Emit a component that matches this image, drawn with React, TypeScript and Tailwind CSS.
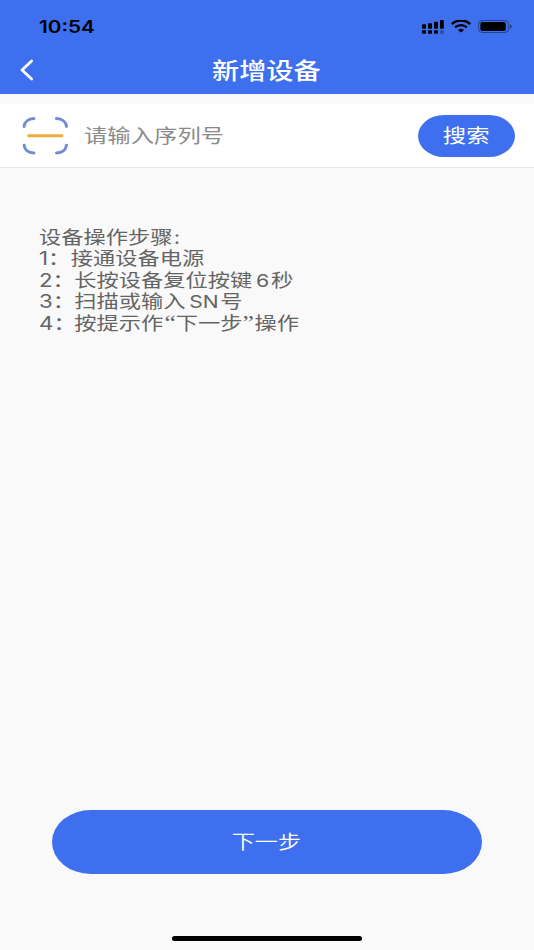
import type { ReactNode } from "react";

const STEPS: { num: string; text: ReactNode; indent: string }[] = [
  { num: "1", text: "接通设备电源", indent: "w-[26px]" },
  { num: "2", text: <>长按设备复位按键<span className="mr-[1.5px] ml-[3px] text-[17.6px]">6</span>秒</>, indent: "w-[29px]" },
  { num: "3", text: <>扫描或输入<span className="mr-[1.5px] ml-[3px] text-[17.3px]">SN</span>号</>, indent: "w-[29px]" },
  {
    num: "4",
    text: (
      <>
        按提示作<span className="ml-[1px] font-['Liberation_Serif'] text-[21px] leading-none">“</span>下一步
        <span className="mr-[0.5px] font-['Liberation_Serif'] text-[21px] leading-none">”</span>操作
      </>
    ),
    indent: "w-[29px]",
  },
];

function SignalIcon() {
  return (
    <svg width="22" height="14" viewBox="0 0 22 14" fill="#000">
      <rect x="0" y="4.2" width="4" height="4.6" rx="0.8" />
      <rect x="6" y="3.2" width="4" height="5.6" rx="0.8" />
      <rect x="12" y="1.8" width="4" height="7" rx="0.8" />
      <rect x="18" y="0" width="3.8" height="8.8" rx="0.8" />
      <rect x="0" y="10.2" width="4" height="3.6" rx="0.8" />
      <rect x="6" y="10.2" width="4" height="3.6" rx="0.8" />
      <rect x="12" y="10.2" width="4" height="3.6" rx="0.8" />
      <rect x="18" y="10.2" width="3.8" height="3.6" rx="0.8" opacity="0.3" />
    </svg>
  );
}

function WifiIcon() {
  return (
    <svg width="20" height="13" viewBox="0 0 20 13" fill="none" stroke="#000">
      <path d="M0.8 4.1C6 -0.7 14 -0.7 19.2 4.1" strokeWidth="2.5" />
      <path d="M4.1 7.3C7.5 4.3 12.5 4.3 15.9 7.3" strokeWidth="2.3" />
      <path d="M7 9.9Q10 7.6 13 9.9L10 12.6Z" fill="#000" stroke="none" />
    </svg>
  );
}

function BatteryIcon() {
  return (
    <svg width="34" height="13" viewBox="0 0 34 13">
      <rect x="0.6" y="0.5" width="30" height="12" rx="3.6" fill="none" stroke="#000" strokeOpacity="0.4" />
      <rect x="2.4" y="2" width="25.4" height="9" rx="1.8" fill="#000" />
      <path d="M32 4.3Q33.8 5 33.8 6.5T32 8.7Z" fill="#000" fillOpacity="0.45" />
    </svg>
  );
}

function ScanIcon() {
  return (
    <svg width="46" height="38" viewBox="0 0 46 38" fill="none" strokeLinecap="round" strokeWidth="3">
      <g stroke="#6f8bd2">
        <path d="M2.1 9.4C2.5 4.8 6.5 1.8 11.9 1.6" />
        <path d="M34.5 1.6C40.1 1.8 44 4.8 44.5 9.4" />
        <path d="M2.1 28.2C2.5 32.8 6.5 35.8 11.9 36" />
        <path d="M34.5 36C40.1 35.8 44 32.8 44.5 28.2" />
      </g>
      <path d="M6.6 18.8H40" stroke="#efac3f" />
    </svg>
  );
}

export default function App() {
  return (
    <div className="flex h-[950px] w-[534px] flex-col overflow-hidden bg-[#f9f9f9] font-['Inter','Noto_Sans_CJK_SC',sans-serif] whitespace-nowrap">
      <header className="h-[93.5px] shrink-0 bg-[#3d6fee]">
        <div className="flex h-[47px] items-center pt-[6px] pr-[22px] pl-[39px]">
          <span className="origin-left scale-x-[1.217] pt-[2px] text-[17px] leading-none font-semibold text-black">10:54</span>
          <div className="ml-auto flex items-center gap-[7px]">
            <SignalIcon />
            <WifiIcon />
            <BatteryIcon />
          </div>
        </div>
        <div className="grid h-[46px] grid-cols-[60px_1fr_60px] items-center">
          <button aria-label="返回" className="pl-[19.5px]">
            <svg width="14" height="22" viewBox="0 0 14 22" fill="none" stroke="#fff" strokeWidth="2.8" strokeLinecap="round" strokeLinejoin="round">
              <path d="M11.6 2L2 11L11.6 20" />
            </svg>
          </button>
          <h1 className="scale-x-[1.217] pt-[2px] pr-[1px] text-center text-[22.3px] leading-none font-medium text-white">新增设备</h1>
        </div>
      </header>

      <section className="mt-[10.5px] flex h-[64px] shrink-0 items-center border-b border-[#e6e6e6] bg-white pt-[0.5px] pr-[19.5px] pl-[22px]">
        <ScanIcon />
        <span className="ml-[16.4px] origin-left scale-x-[1.217] pt-[2px] text-[19.2px] leading-none text-[#8a8a8a]">请输入序列号</span>
        <button className="ml-auto flex h-[42px] w-[97px] items-center justify-center rounded-[26px/21px] bg-[#3d6fee] pt-[2px] text-white">
          <span className="scale-x-[1.217] text-[19.2px] leading-none">搜索</span>
        </button>
      </section>

      <section className="mt-[58.5px] ml-[39px] w-[300px] origin-left scale-x-[1.217] text-[18.3px] leading-[21.5px] text-[#646464]">
        <p>设备操作步骤<span className="ml-[1px]">:</span></p>
        {STEPS.map((s) => (
          <div key={s.num} className="flex h-[21.5px]">
            <span className={s.indent}>{s.num}：</span>
            <span>{s.text}</span>
          </div>
        ))}
      </section>

      <button className="mt-auto ml-[52px] flex h-[63.5px] w-[430px] shrink-0 items-center justify-center rounded-[39px/32px] bg-[#3d6fee] pt-[2px] text-white">
        <span className="scale-x-[1.217] pr-[1px] text-[19px] leading-none font-[350]">下一步</span>
      </button>
      <div className="mx-auto mt-[62.5px] mb-[9px] h-[5px] w-[190px] shrink-0 rounded-full bg-black" />
    </div>
  );
}
